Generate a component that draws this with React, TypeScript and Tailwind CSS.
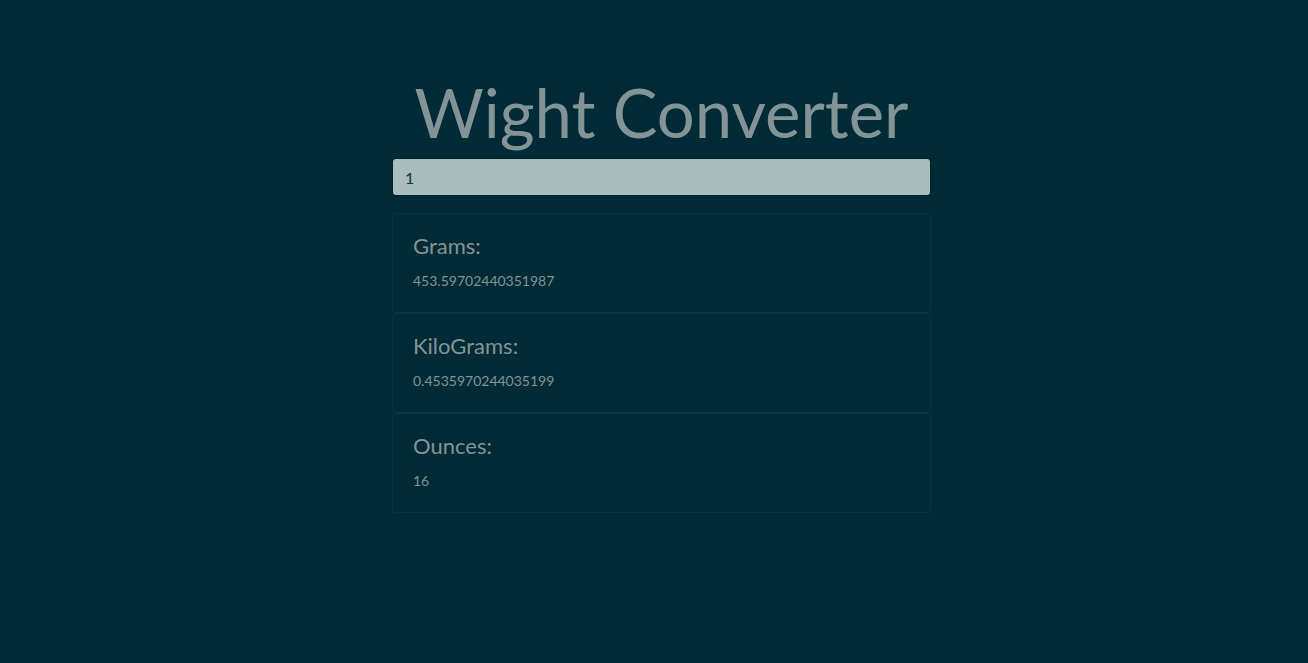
import React, { useState } from 'react';

const font = { fontFamily: '"Lato", "Open Sans", sans-serif' };

export default function App() {
  const [value, setValue] = useState('1');
  const n = parseFloat(value) || 0;

  const results = [
    { label: 'Grams:', value: String(n / 0.0022046) },
    { label: 'KiloGrams:', value: String(n / 2.2046) },
    { label: 'Ounces:', value: String(n * 16) },
  ];

  return (
    <div className="min-h-screen bg-[#002b36] pl-[15px] pt-[69px]" style={font}>
      <div className="mx-auto w-[539px] flex flex-col items-center">
        <h1 className="text-[67px] leading-[86px] font-normal text-[#839496] whitespace-nowrap">Wight Converter</h1>
        <input
          type="text"
          value={value}
          onChange={(e) => setValue(e.target.value)}
          className="mt-1 w-[537px] h-9 px-3 rounded-[3px] bg-[#a9bdbd] text-[#073642] text-base outline-none shadow-[0_0_0_1px_#00212a]"
        />
        <div className="mt-[18px] w-full flex flex-col">
          {results.map((r) => (
            <div key={r.label} className="h-[100px] rounded border border-[#073642] bg-[#002b36] px-5 pt-5">
              <h5 className="text-[22px] leading-6 text-[#839496] mb-3">{r.label}</h5>
              <p className="text-sm leading-[21px] text-[#839496]">{r.value}</p>
            </div>
          ))}
        </div>
      </div>
    </div>
  );
}
